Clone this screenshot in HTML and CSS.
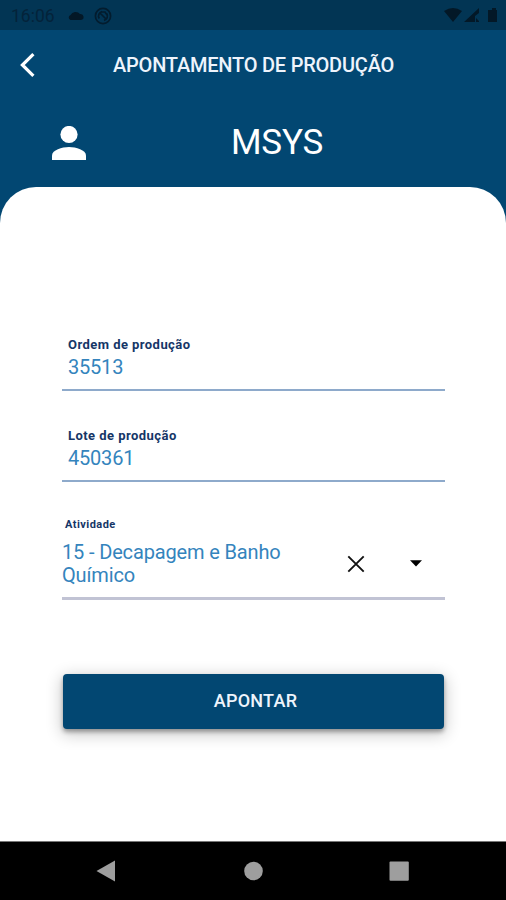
FILE: index.html
```html
<!DOCTYPE html>
<html lang="pt-BR">
<head>
<meta charset="utf-8">
<title>Apontamento de Produção</title>
<link rel="stylesheet" href="styles.css">
</head>
<body>
<div class="screen">
  <div class="status">
    <span class="clock">16:06</span>
    <svg class="cloud" width="16" height="11" viewBox="0 0 16 11"><path d="M2.6 10A2.6 2.6 0 0 1 2.6 5 5.4 4.8 0 0 1 12 4 3 3 0 0 1 13 10Z"/></svg>
    <svg class="sync" width="18" height="18" viewBox="0 0 18 18"><circle cx="9" cy="9" r="7.6"/><path d="M5.3 11.5A4.5 4.5 0 0 1 8 4.6M12.7 6.5A4.5 4.5 0 0 1 10 13.4M6 6l6 6M7 5h4l2 3"/></svg>
    <svg class="signals" width="54" height="16" viewBox="0 0 54 16"><path d="M0 3Q9-3 18 3L9 14ZM20 14L35 0V5L31 8V14ZM32 10l3 3v1h-3ZM46 2h2V0h4v2h1v12h-9V2Z"/></svg>
  </div>
  <header class="appbar">
    <svg class="back" width="16" height="26" viewBox="0 0 16 26"><path d="M13.4 2.2L2.4 13l11 10.8"/></svg>
    <h1>APONTAMENTO DE PRODUÇÃO</h1>
  </header>
  <div class="profile">
    <svg class="person" width="34" height="34" viewBox="0 0 34 34"><circle cx="17" cy="8.5" r="8.6"/><path d="M0 34V29.5C0 24 10 21 17 21S34 24 34 29.5V34Z"/></svg>
    <span class="name">MSYS</span>
  </div>
  <main class="sheet">
    <div class="field">
      <label>Ordem de produção</label>
      <div class="value">35513</div>
    </div>
    <div class="field second">
      <label>Lote de produção</label>
      <div class="value">450361</div>
    </div>
    <div class="select">
      <label>Atividade</label>
      <div class="choice">
        <div class="option">15 - Decapagem e Banho<br>Químico</div>
        <svg class="clear" width="18" height="18" viewBox="0 0 18 18"><path d="M1.3 1.3l15.4 15.4M16.7 1.3L1.3 16.7"/></svg>
        <svg class="caret" width="12" height="7" viewBox="0 0 12 7"><path d="M0 .3h12L6 6.5Z"/></svg>
      </div>
    </div>
    <button class="submit">APONTAR</button>
  </main>
  <nav class="navbar">
    <svg width="506" height="58" viewBox="0 0 506 58"><path d="M96.5 29L115 18.5V39.5Z"/><circle cx="253.5" cy="29" r="9.3"/><rect x="389.5" y="19.5" width="19.3" height="19.3" rx="1"/></svg>
  </nav>
</div>
</body>
</html>
```
FILE: styles.css
```css
* { box-sizing: border-box; }
body { margin: 0; font-family: Roboto, "Liberation Sans", sans-serif; }
svg { display: block; flex: none; }
.screen {
  width: 506px;
  height: 900px;
  display: flex;
  flex-direction: column;
  background: #024772;
  overflow: hidden;
}
.status {
  height: 30px;
  flex: none;
  display: flex;
  align-items: center;
  padding: 1px 8px 0 11px;
  background: #023554;
}
.clock { width: 57px; font-size: 17.5px; letter-spacing: 0; color: #04233a; }
.cloud, .signals { fill: #031827; }
.sync { margin-left: 10px; fill: none; stroke: #031c2e; stroke-width: 1.7; }
.signals { margin-left: auto; }
.appbar {
  height: 70px;
  flex: none;
  display: flex;
  align-items: center;
  padding: 0 0 1px 20px;
}
.back { fill: none; stroke: #fff; stroke-width: 3.2; }
h1 {
  margin: 0 0 0 77px;
  font-size: 20px;
  line-height: 24px;
  font-weight: 500;
  letter-spacing: -.22px;
  color: #eef4fc;
  white-space: nowrap;
}
.profile {
  height: 87px;
  flex: none;
  display: flex;
  align-items: center;
  padding: 0 0 1px 52px;
}
.person { fill: #fff; }
.name { margin-left: 145px; font-size: 35px; line-height: 40px; letter-spacing: -.2px; color: #fff; }
.sheet {
  height: 655px;
  flex: none;
  padding: 149px 61px 0 62px;
  background: #fff;
  border-radius: 36px 36px 0 0;
}
label { display: block; font-weight: 700; letter-spacing: .45px; color: #153667; }
.field {
  height: 55px;
  padding-left: 6px;
  border-bottom: 2px solid #8eaacb;
}
.field label { font-size: 13px; line-height: 18px; }
.value { font-size: 20px; line-height: 26px; letter-spacing: -.2px; color: #3484bd; }
.second { margin-top: 36px; }
.select {
  height: 83px;
  margin-top: 35px;
  border-bottom: 3px solid #c1c3d4;
}
.select label { padding-left: 3px; font-size: 11px; line-height: 16px; }
.choice { display: flex; align-items: center; height: 47px; margin-top: 7px; }
.option { width: 285px; padding-top: 1px; font-size: 20px; line-height: 23.5px; letter-spacing: -.15px; color: #3484bd; white-space: nowrap; }
.clear { fill: none; stroke: #111; stroke-width: 1.9; }
.caret { margin-left: 45px; fill: #000; }
.submit {
  display: block;
  width: 381px;
  height: 55px;
  margin: 74px 0 0 1px;
  padding: 0 0 2px 4px;
  border: 0;
  border-radius: 4px;
  background: #024772;
  box-shadow: 0 3px 4px rgba(0,0,0,.32), 0 4px 16px 2px rgba(0,0,0,.2);
  font: 500 18px/24px Roboto, sans-serif;
  letter-spacing: .25px;
  color: #eef4fc;
}
.navbar { height: 58px; flex: none; background: #000; box-shadow: 0 -1px 0 #777; }
.navbar svg { fill: #9e9e9e; }
```
